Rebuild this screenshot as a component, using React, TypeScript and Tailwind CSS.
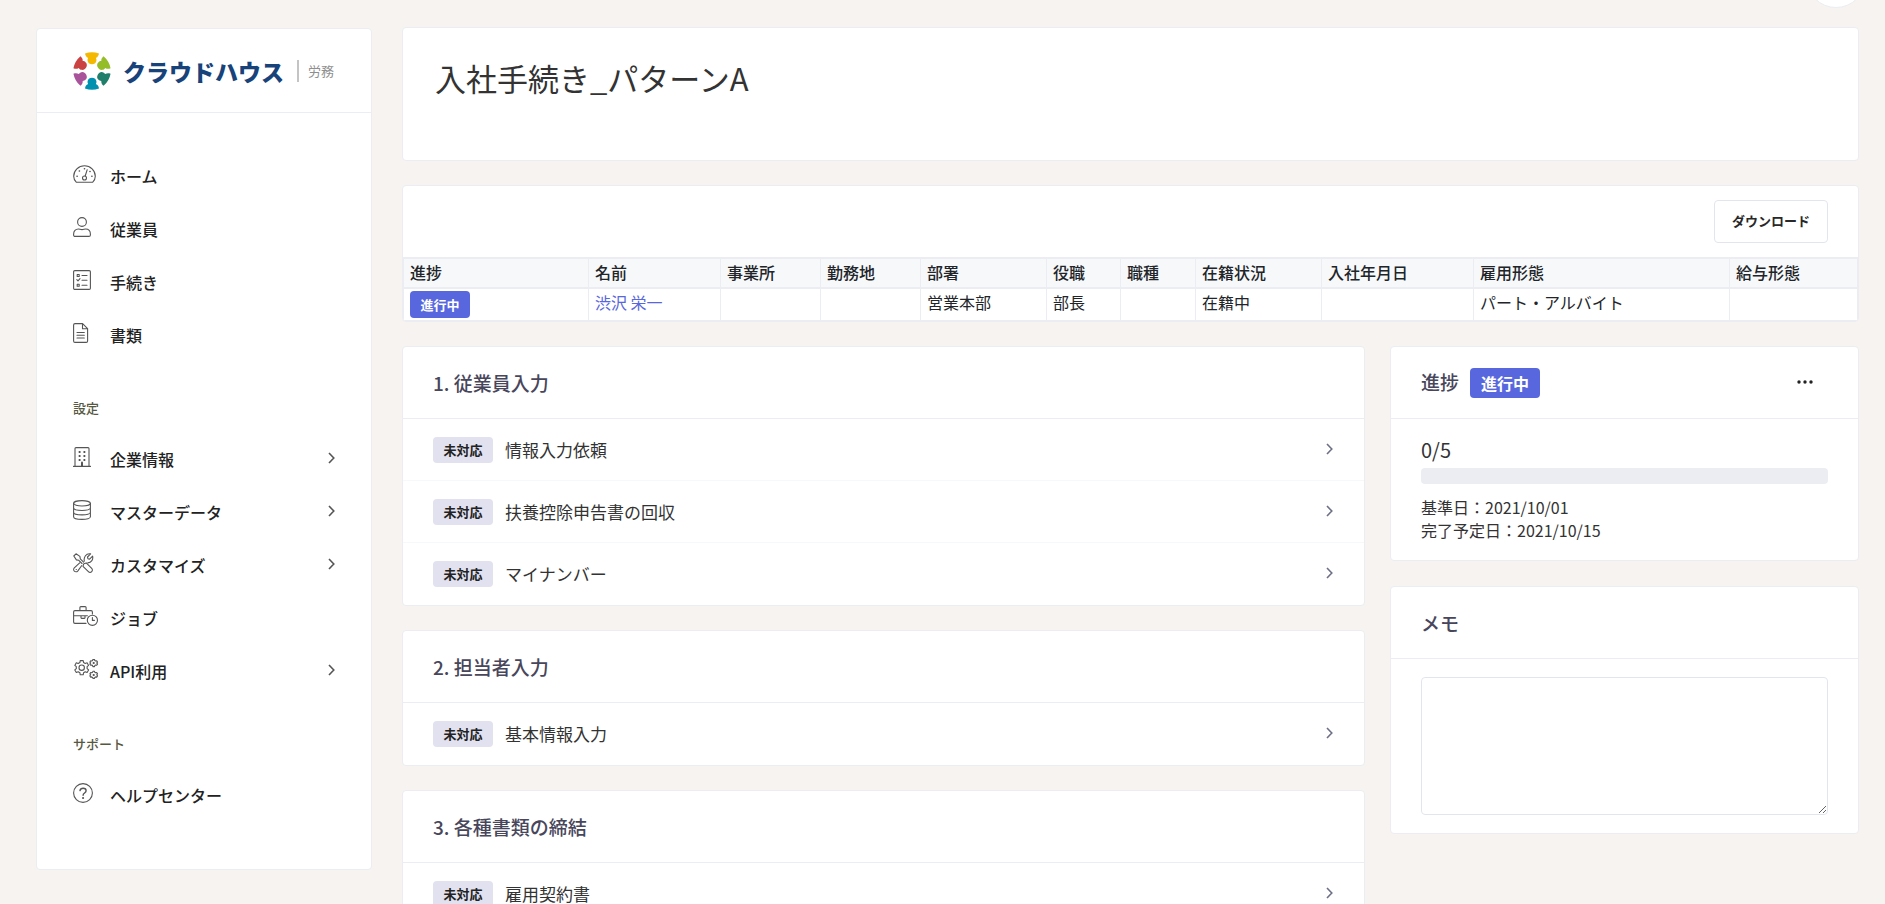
import React from "react";

type NavItem = { label: string; icon: React.ReactNode; expandable?: boolean };

const GaugeIcon = () => (
	<>
		<path d="M3.4 18.3C1.5 16.6.7 14.6.7 12.2a10.8 10.4 0 0 1 21.6 0c0 2.4-.8 4.400-2.700 6.100Z" />
		<circle cx="11.500" cy="14" r="2" />
		<path d="m12.200 12 2-6.300" />
		<path d="M4 12.300h.2M6.300 7h.2M11.400 4.800h.2M18.800 12.300h.2M16.900 7.400h.2" strokeWidth="1.500" />
	</>
);

const UserIcon = () => (
	<>
		<circle cx="9" cy="5" r="4.400" />
		<path d="M.6 17.200c0-3.200 2-5.200 4.800-5.200 1.300 0 2 .6 3.600.6s2.300-.6 3.600-.6c2.800 0 4.800 2 4.800 5.200v.8c0 .9-.6 1.400-1.500 1.400H2.100C1.200 19.400.6 18.900.6 18Z" />
	</>
);

const ChecklistIcon = () => (
	<>
		<rect x=".6" y=".6" width="16.800" height="18.800" rx="1.200" />
		<path d="M4.200 4.500h2v2h-2zM4.200 14.300h2v2h-2zM3.800 9.600l1.200 1.200 2-2.200M9 5.500h5M9 10.300h5M9 15.300h5" />
	</>
);

const FileIcon = () => (
	<>
		<path d="M2 .6h7.600l5 5V18c0 .8-.5 1.400-1.400 1.400H2C1.100 19.400.6 18.900.6 18V2C.6 1.100 1.100.6 2 .6ZM9.500.8v5h5M4 9.500h7.300M4 12.200h7.300M4 15h7.300" />
	</>
);

const BuildingIcon = () => (
	<>
		<path d="M.5 19.400h17M2 19.200V1.600c0-.6.4-1 1-1h12c.6 0 1 .4 1 1v17.600" />
		<path d="M9 19v-3.500" strokeWidth="2" />
		<path d="M5.700 5h1.800M10.500 5h1.800M5.700 9h1.800M10.500 9h1.800M5.700 13h1.800M10.500 13h1.800" strokeWidth="1.800" strokeLinecap="butt" />
	</>
);

const DatabaseIcon = () => (
	<>
		<ellipse cx="9" cy="3.300" rx="8.400" ry="2.700" />
		<path d="M.6 3.300v13.400c0 1.500 3.700 2.700 8.400 2.700s8.400-1.200 8.400-2.700V3.300M.6 7.800c0 1.500 3.700 2.700 8.400 2.700s8.400-1.200 8.400-2.700M.6 12.200c0 1.500 3.700 2.700 8.400 2.700s8.400-1.200 8.400-2.700" />
	</>
);

const ToolsIcon = () => (
	<>
		<path d="M3 .8.8 3l2.600 3.900 2.400.4 3.200 3.200M3 .8l3.900 2.600.4 2.400 3.300 3.300" />
		<path d="m11 10.700 2.200-.8 5.500 5.500a2.300 2.300 0 0 1-3.300 3.300L10 13.300l.6-2.300" />
		<path d="M8.600 12.700 4.700 18.100a2.300 2.300 0 0 1-3.400-3.300l5.400-5M11.300 8.200c-.8-4 1.700-8.100 6.300-7.300l-3.100 3.100.4 1.700 1.700.4 3-3c.8 3.400-1.200 6.500-4.800 6.800" />
		<path d="M3.200 16.500h.2" />
	</>
);

const BriefcaseClockIcon = () => (
	<>
		<path d="M6.900 4.500V1.600c0-.6.3-1 1-1h4.200c.7 0 1 .4 1 1v2.900M13 17.400H1.900c-.8 0-1.300-.5-1.300-1.300V6c0-.8.5-1.400 1.300-1.400h16.200c.8 0 1.300.6 1.300 1.400v2M.8 9.800h13.600M8 10v1.800c0 .4.2.6.6.6h2.800c.4 0 .6-.2.600-.6V10" />
		<circle cx="19.400" cy="14.300" r="5.100" />
		<path d="M19.400 11.500v2.900h2" />
	</>
);

const GearsIcon = () => (
	<>
		<path d="m6.900 3.600.3-2h3l.4 2 1.600.9 1.900-.7 1.500 2.600-1.500 1.300v1.900l1.500 1.300-1.500 2.600-1.900-.7-1.600.9-.4 2.100h-3l-.3-2.100-1.700-.9-1.900.7-1.500-2.600 1.500-1.300V7.700L1.800 6.400l1.500-2.600 1.900.7Z" />
		<circle cx="8.700" cy="8.700" r="2.700" />
		<path d="m19.600 1.500.3-1h1.600l.3 1 .9.500 1-.2.8 1.300-.7.8.7 1.200-.8 1.200-1-.2-.9.500-.3 1h-1.600l-.3-1-.9-.5-1 .2-.8-1.200.7-1.200-.7-.8.8-1.300 1 .2ZM19.600 13.300l.3-1h1.600l.3 1 .9.500 1-.2.8 1.300-.7.8.7 1.200-.8 1.200-1-.2-.9.500-.3 1h-1.600l-.3-1-.9-.5-1 .2-.8-1.200.7-1.200-.7-.8.8-1.300 1 .2Z" />
		<path d="M20.600 4h.2M20.600 15.900h.2" strokeWidth="2" />
	</>
);

const HelpIcon = () => (
	<>
		<circle cx="10" cy="10" r="9.400" />
		<path d="M7 7.600c.3-1.500 1.500-2.300 3.100-2.300 1.700 0 3 1 3 2.500 0 2.200-3 2.200-3 4.400" strokeWidth="1.400" />
		<path d="M10 15h.1" strokeWidth="2" />
	</>
);

const mainNav: NavItem[] = [
	{ label: "ホーム", icon: <GaugeIcon /> },
	{ label: "従業員", icon: <UserIcon /> },
	{ label: "手続き", icon: <ChecklistIcon /> },
	{ label: "書類", icon: <FileIcon /> },
];

const settingsNav: NavItem[] = [
	{ label: "企業情報", icon: <BuildingIcon />, expandable: true },
	{ label: "マスターデータ", icon: <DatabaseIcon />, expandable: true },
	{ label: "カスタマイズ", icon: <ToolsIcon />, expandable: true },
	{ label: "ジョブ", icon: <BriefcaseClockIcon /> },
	{ label: "API利用", icon: <GearsIcon />, expandable: true },
];

const supportNav: NavItem[] = [{ label: "ヘルプセンター", icon: <HelpIcon /> }];

const columns = [
	{ label: "進捗", width: "w-[185px]" },
	{ label: "名前", width: "w-[132px]" },
	{ label: "事業所", width: "w-[100px]" },
	{ label: "勤務地", width: "w-[100px]" },
	{ label: "部署", width: "w-[126px]", value: "営業本部" },
	{ label: "役職", width: "w-[74px]", value: "部長" },
	{ label: "職種", width: "w-[75px]" },
	{ label: "在籍状況", width: "w-[126px]", value: "在籍中" },
	{ label: "入社年月日", width: "w-[152px]" },
	{ label: "雇用形態", width: "w-[256px]", value: "パート・アルバイト" },
	{ label: "給与形態", width: "w-[127px]" },
];

const steps = [
	{ title: "1. 従業員入力", tasks: ["情報入力依頼", "扶養控除申告書の回収", "マイナンバー"] },
	{ title: "2. 担当者入力", tasks: ["基本情報入力"] },
	{ title: "3. 各種書類の締結", tasks: ["雇用契約書"] },
];

function Chevron({ className }: { className: string }) {
	return (
		<svg viewBox="0 0 7 12" className={`h-3 w-[7px] shrink-0 ${className}`} fill="none" stroke="currentColor" strokeWidth="1.600">
			<path d="m1 1 4.800 5L1 11" />
		</svg>
	);
}

function Logo() {
	const people = ["#f5b800", "#94bd28", "#207f6b", "#0090b0", "#a9549a", "#cb4242"];
	return (
		<a href="#" className="flex items-center">
			<svg viewBox="-19 -19 38 38" className="h-[38px] w-[38px]">
				{people.map((color, i) => (
					<path
						key={color}
						transform={`rotate(${i * 60})`}
						fill={color}
						d="M-7-17.400Q0-19.900 7-17.400C6.600-15 5.600-13.800 3.900-13 4.500-11.900 4.600-10.900 4.300-9.700 3.800-7.800 2.200-6.800 0-6.800S-3.800-7.800-4.300-9.700C-4.600-10.900-4.500-11.900-3.900-13-5.600-13.800-6.600-15-7-17.400Z"
					/>
				))}
			</svg>
			<span className="ml-3 text-[23px] leading-8 font-black text-[#17427a]">クラウドハウス</span>
			<span className="ml-[13px] h-[22px] w-[2px] bg-[#c4c4c4]" />
			<span className="ml-[9px] text-[13px] text-[#8f8f8f]">労務</span>
		</a>
	);
}

function NavList({ items }: { items: NavItem[] }) {
	return (
		<ul>
			{items.map((item) => (
				<li key={item.label}>
					<a href="#" className="flex h-[53px] items-center">
						<span className="w-[37px] pb-1">
							<svg
								viewBox="0 0 26 20"
								className="h-5 w-[26px] text-[#555]"
								fill="none"
								stroke="currentColor"
								strokeWidth="1.100"
								strokeLinecap="round"
								strokeLinejoin="round"
							>
								{item.icon}
							</svg>
						</span>
						<span className="flex-1 text-base font-medium text-[#222]">{item.label}</span>
						{item.expandable && <Chevron className="mb-[2px] text-[#555]" />}
					</a>
				</li>
			))}
		</ul>
	);
}

function NavHeading({ children }: { children: React.ReactNode }) {
	return <h4 className="mt-[22px] flex h-[49px] items-center text-[13px] font-medium text-[#56583f]">{children}</h4>;
}

function Sidebar() {
	return (
		<aside className="mt-px w-[336px] shrink-0 rounded border border-[#ebedf2] bg-white">
			<div className="flex h-[84px] items-center border-b border-[#ebedf2] px-9">
				<Logo />
			</div>
			<nav className="px-9 pt-9 pb-12">
				<NavList items={mainNav} />
				<NavHeading>設定</NavHeading>
				<NavList items={settingsNav} />
				<NavHeading>サポート</NavHeading>
				<NavList items={supportNav} />
			</nav>
		</aside>
	);
}

function Card({ children }: { children: React.ReactNode }) {
	return <section className="overflow-hidden rounded border border-[#ebedf2] bg-white">{children}</section>;
}

function CardHeader({ children }: { children: React.ReactNode }) {
	return (
		<div className="flex h-[72px] items-center border-b border-[#ebedf2] px-[30px] text-[19px] font-medium text-[#48465b]">
			{children}
		</div>
	);
}

function EmployeeTable() {
	return (
		<Card>
			<div className="flex h-[71px] items-center justify-end px-[30px]">
				<button className="h-[43px] rounded border border-[#e2e5ec] px-[17px] pb-px text-[13px] font-bold text-[#282828]">
					ダウンロード
				</button>
			</div>
			<table className="w-full table-fixed border-separate border-spacing-0 border-x border-b border-[#ebedf2] text-left text-base leading-6 text-[#212529]">
				<thead>
					<tr className="h-[32px] bg-[#f7f8fa]">
						{columns.map((col) => (
							<th
								key={col.label}
								className={`${col.width} border-y-2 border-r border-[#ebedf2] px-[6px] pb-[2px] font-medium last:border-r-0`}
							>
								{col.label}
							</th>
						))}
					</tr>
				</thead>
				<tbody>
					<tr className="h-[31px]">
						<td className="border-r border-[#ebedf2] px-[6px] pt-px align-top">
							<span className="mt-px flex h-[27px] w-[60px] items-center justify-center rounded bg-[#5867dd] text-[13px] font-bold text-white">
								進行中
							</span>
						</td>
						<td className="border-r border-[#ebedf2] px-[6px] pt-px align-top">
							<a href="#" className="text-[#5867dd]">
								渋沢 栄一
							</a>
						</td>
						{columns.slice(2).map((col) => (
							<td key={col.label} className="border-r border-[#ebedf2] px-[6px] pt-px align-top last:border-r-0">
								{col.value}
							</td>
						))}
					</tr>
				</tbody>
			</table>
		</Card>
	);
}

export default function App() {
	return (
		<div className="relative flex min-h-screen items-start overflow-hidden bg-[#f7f3f0] pt-[27px] pr-[26px] pb-6 pl-9 font-['Noto_Sans_CJK_JP',sans-serif]">
			<button aria-label="メニュー" className="absolute -top-[52px] right-[19px] h-[60px] w-[60px] rounded-full border border-[#ebedf2] bg-white" />
			<Sidebar />
			<main className="ml-[30px] flex min-w-0 flex-1 flex-col gap-6">
				<Card>
					<div className="h-[132px] px-8 pt-[27px]">
						<h1 className="text-[31px] leading-[46px] text-[#333]">入社手続き_パターンA</h1>
					</div>
				</Card>
				<EmployeeTable />
				<div className="grid grid-cols-3 items-start gap-x-[25px]">
					<div className="col-span-2 flex flex-col gap-6">
						{steps.map((step) => (
							<Card key={step.title}>
								<CardHeader>
									<h2 className="pt-[2px]">{step.title}</h2>
								</CardHeader>
								<ul>
									{step.tasks.map((task) => (
										<li key={task} className="border-b border-[#f7f8fa] last:border-transparent">
											<a href="#" className="flex h-[61px] items-center px-[30px]">
												<span className="flex h-[26px] w-[60px] items-center justify-center rounded bg-[#e1e1ef] text-[13px] font-bold text-[#222]">
													未対応
												</span>
												<span className="ml-3 flex-1 text-[17px] text-[#333]">{task}</span>
												<Chevron className="mr-px mb-px text-[#6c7086]" />
											</a>
										</li>
									))}
								</ul>
							</Card>
						))}
					</div>
					<div className="flex flex-col gap-[25px]">
						<Card>
							<CardHeader>
								<h2>進捗</h2>
								<span className="ml-[11px] flex h-[30px] w-[70px] items-center justify-center rounded bg-[#5867dd] text-base font-bold text-white">
									進行中
								</span>
								<button aria-label="その他" className="ml-auto px-[15px] pt-3 pb-[14px] text-[#222]">
									<svg viewBox="0 0 16 4" className="h-1 w-4" fill="currentColor">
										<circle cx="2" cy="2" r="1.700" />
										<circle cx="8" cy="2" r="1.700" />
										<circle cx="14" cy="2" r="1.700" />
									</svg>
								</button>
							</CardHeader>
							<div className="px-[30px] pt-4 pb-[18px] text-[#333]">
								<p className="text-xl leading-[30px]">0/5</p>
								<div className="mt-[3px] h-4 rounded bg-[#ebedf2]" role="progressbar" aria-valuenow={0} aria-valuemax={5} />
								<div className="mt-3 text-base leading-[23px]">
									<p>基準日：2021/10/01</p>
									<p>完了予定日：2021/10/15</p>
								</div>
							</div>
						</Card>
						<Card>
							<CardHeader>
								<label htmlFor="memo" className="pt-[2px]">
									メモ
								</label>
							</CardHeader>
							<div className="px-[30px] py-[18px]">
								<textarea id="memo" className="block h-[138px] w-full resize rounded border border-[#e2e5ec] bg-white p-3 text-base" />
							</div>
						</Card>
					</div>
				</div>
			</main>
		</div>
	);
}
